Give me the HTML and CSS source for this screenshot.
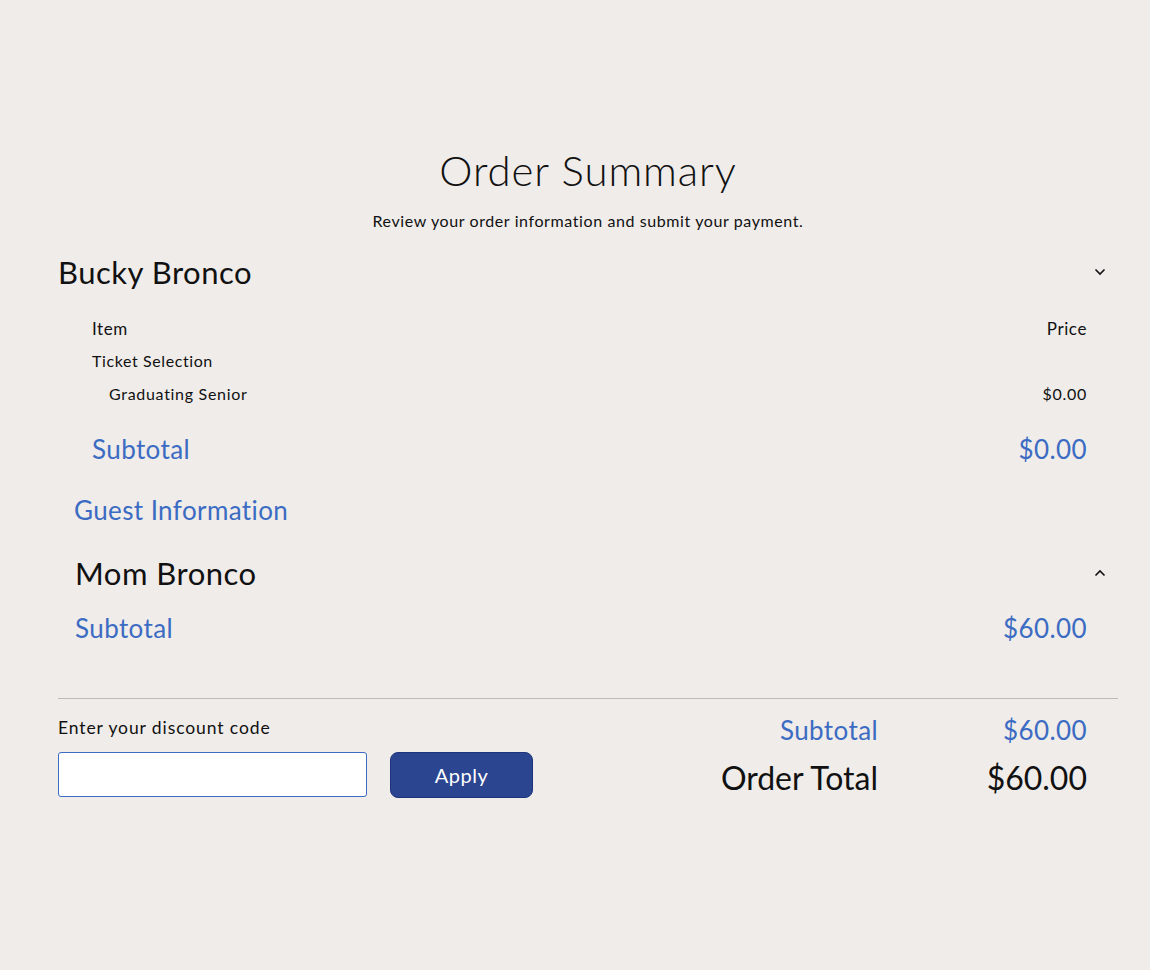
FILE: index.html
```html
<!doctype html>
<html lang="en">
<head>
	<meta charset="UTF-8">
	<title>Order Summary</title>
	<link rel="stylesheet" href="styles.css">
</head>
<body>
	<div class="page">
		<h1 class="title">Order Summary</h1>
		<p class="intro">Review your order information and submit your payment.</p>

		<div class="guest">
			<div class="guest-head">
				<h2>Bucky Bronco</h2>
				<svg class="chev" width="12" height="8" viewBox="0 0 12 8"><path d="M1.5 1.5 L6 6 L10.5 1.5" fill="none" stroke="#111" stroke-width="1.6"/></svg>
			</div>
			<div class="items">
				<div class="row head"><span>Item</span><span>Price</span></div>
				<div class="row cat"><span>Ticket Selection</span></div>
				<div class="row sub"><span>Graduating Senior</span><span>$0.00</span></div>
				<div class="row total"><span>Subtotal</span><span>$0.00</span></div>
			</div>
			<div class="guest-info">Guest Information</div>
		</div>

		<div class="guest second">
			<div class="guest-head">
				<h2>Mom Bronco</h2>
				<svg class="chev" width="12" height="8" viewBox="0 0 12 8"><path d="M1.5 6.5 L6 2 L10.5 6.5" fill="none" stroke="#111" stroke-width="1.6"/></svg>
			</div>
			<div class="row total"><span>Subtotal</span><span>$60.00</span></div>
		</div>

		<div class="bottom">
			<div class="discount">
				<label for="code">Enter your discount code</label>
				<div class="discount-row">
					<input id="code" type="text">
					<button>Apply</button>
				</div>
			</div>
			<div class="sums">
				<div class="sum blue"><span>Subtotal</span><span>$60.00</span></div>
				<div class="sum big"><span>Order Total</span><span>$60.00</span></div>
			</div>
		</div>
	</div>
</body>
</html>
```

FILE: styles.css
```css
body { margin:0; background:#efecea; font-family:Lato, "Open Sans", sans-serif; color:#111; }
.page { width:1060px; margin:0; padding:142px 0 0 58px; }
.title { margin:0; font-size:42px; font-weight:300; letter-spacing:0.9px; text-align:center; line-height:56px; }
.intro { margin:11px 0 0; font-size:16px; letter-spacing:0.6px; text-align:center; line-height:24px; }

.guest-head { display:flex; justify-content:space-between; align-items:center; padding-right:12px; }
.guest-head h2 { margin:0; font-size:31px; font-weight:400; letter-spacing:0.5px; line-height:40px; }
.guest { margin-top:19px; }
.items { padding:25px 31px 0 34px; }
.row { display:flex; justify-content:space-between; }
.row.head { font-size:17px; letter-spacing:0.6px; line-height:24px; }
.row.cat { font-size:16px; letter-spacing:0.6px; line-height:24px; margin-top:8px; }
.row.sub { font-size:16px; letter-spacing:0.7px; line-height:24px; margin-top:9px; padding-left:17px; }
.row.total { color:#3b6bc2; font-size:26px; letter-spacing:0.4px; line-height:34px; margin-top:26px; }
.guest-info { color:#3b6bc2; font-size:26px; letter-spacing:0.4px; line-height:34px; margin:27px 0 0 16px; }

.guest.second { margin-top:26px; padding-left:17px; }
.guest.second .row.total { margin-top:18px; padding-right:31px; }

.bottom { display:flex; justify-content:space-between; border-top:1px solid #bdbab8; margin-top:53px; padding-top:16px; }
.discount label { display:block; font-size:17.5px; letter-spacing:0.9px; line-height:26px; }
.discount-row { display:flex; gap:23px; margin-top:11px; }
.discount-row input { width:307px; height:43px; border:1.5px solid #3b6bc2; border-radius:3px; background:#fff; padding:0; outline:none; }
.discount-row button { width:143px; height:46px; background:#2b4590; color:#fff; border:1px solid #1e347a; border-radius:8px; font-family:inherit; font-size:20px; letter-spacing:0.5px; }

.sums { padding:0 31px 0 0; }
.sum { display:grid; grid-template-columns:auto 209px; text-align:right; letter-spacing:0.4px; }
.sum.blue { color:#3b6bc2; font-size:26px; line-height:32px; margin-top:-1px; }
.sum.big { font-size:32px; line-height:40px; margin-top:12px; letter-spacing:0; }
```
